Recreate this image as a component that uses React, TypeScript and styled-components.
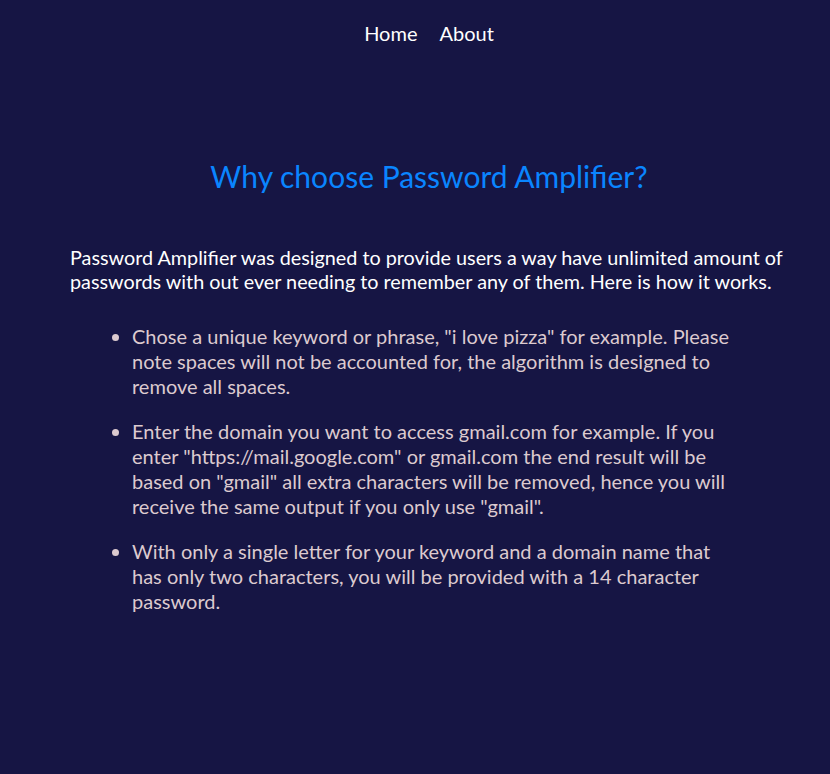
import React from "react";
import styled, { createGlobalStyle } from "styled-components";

const Global = createGlobalStyle`
  html, body { margin: 0; padding: 0; background: #161544; }
  body { font-family: Lato, "Open Sans", sans-serif; min-height: 774px; }
`;

const Page = styled.div`
  min-height: 774px;
  background: #161544;
  padding-left: 70px;
  box-sizing: border-box;
`;

const Inner = styled.div`
  width: 718px;
`;

const Nav = styled.nav`
  display: flex;
  justify-content: center;
  gap: 22px;
  padding-top: 20px;
  height: 28px;
`;

const NavLink = styled.a`
  color: #ffffff;
  font-size: 20px;
  line-height: 26px;
  text-decoration: none;
`;

const Heading = styled.h1`
  margin: 110px 0 0;
  text-align: center;
  color: #0a85ff;
  font-size: 30px;
  font-weight: 400;
  line-height: 36px;
`;

const Intro = styled.p`
  margin: 51px -10px 0 0;
  color: #ffffff;
  font-size: 19.8px;
  line-height: 24px;
`;

const List = styled.ul`
  margin: 31px 0 0 48px;
  padding-left: 14px;
  width: 600px;
  color: #dccacf;
  font-size: 20px;
  line-height: 25px;
`;

const Item = styled.li`
  margin-bottom: 20px;
`;

const items = [
  'Chose a unique keyword or phrase, "i love pizza" for example. Please note spaces will not be accounted for, the algorithm is designed to remove all spaces.',
  'Enter the domain you want to access gmail.com for example. If you enter "https://mail.google.com" or gmail.com the end result will be based on "gmail" all extra characters will be removed, hence you will receive the same output if you only use "gmail".',
  "With only a single letter for your keyword and a domain name that has only two characters, you will be provided with a 14 character password.",
];

export default function App() {
  return (
    <>
      <Global />
      <Page>
        <Inner>
          <Nav>
            <NavLink href="#">Home</NavLink>
            <NavLink href="#">About</NavLink>
          </Nav>
          <Heading>Why choose Password Amplifier?</Heading>
          <Intro>
            Password Amplifier was designed to provide users a way have unlimited amount of passwords with out ever
            needing to remember any of them. Here is how it works.
          </Intro>
          <List>
            {items.map((t, i) => (
              <Item key={i}>{t}</Item>
            ))}
          </List>
        </Inner>
      </Page>
    </>
  );
}
